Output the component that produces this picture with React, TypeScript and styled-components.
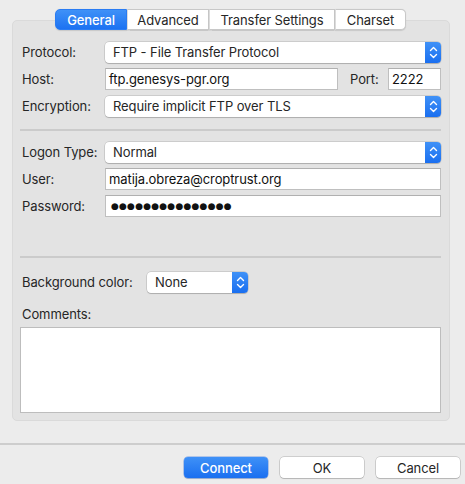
import React from "react";
import styled, { createGlobalStyle } from "styled-components";

const Global = createGlobalStyle`
  html, body { margin: 0; padding: 0; }
  body {
    width: 465px; height: 484px; overflow: hidden;
    background: #ececec;
    font-family: Inter, "Liberation Sans", sans-serif;
    font-size: 13px; color: #262626;
    -webkit-font-smoothing: antialiased;
  }
`;

const Window = styled.div`
  width: 465px; height: 484px;
  display: flex; flex-direction: column;
  box-sizing: border-box;
  padding-top: 9px;
`;

const TabBar = styled.div`
  position: relative; z-index: 2;
  display: flex; justify-content: center;
  margin-left: -4px;
  height: 21px; margin-bottom: -10px;
`;

const Tab = styled.div<{ $active?: boolean; $w: number; $first?: boolean; $last?: boolean }>`
  box-sizing: border-box;
  width: ${(p) => p.$w}px; height: 21px;
  display: flex; align-items: center; justify-content: center;
  font-size: 13px; letter-spacing: -0.1px;
  background: ${(p) => (p.$active ? "linear-gradient(#3f91f7, #1c72f2)" : "#ffffff")};
  color: ${(p) => (p.$active ? "#ffffff" : "#262626")};
  font-weight: ${(p) => (p.$active ? 500 : 400)};
  border: 1px solid ${(p) => (p.$active ? "#2a7cf3" : "#c8c8c8")};
  border-left: ${(p) => (p.$first ? undefined : p.$active ? "none" : "1px solid #dcdcdc")};
  border-radius: ${(p) => (p.$first ? "5px 0 0 5px" : p.$last ? "0 5px 5px 0" : "0")};
  box-shadow: 0 0.5px 1px rgba(0,0,0,0.12);
`;

const Panel = styled.div`
  margin: 0 15px 0 12px;
  height: 401px;
  box-sizing: border-box;
  background: #e3e3e3;
  border: 1px solid #dadada;
  border-radius: 5px;
  padding: 20px 8px 7px 7px;
  display: flex; flex-direction: column;
`;

const Group = styled.div<{ $gap: number }>`
  display: flex; flex-direction: column;
  gap: ${(p) => p.$gap}px;
`;

const Row = styled.div`
  display: flex; align-items: center;
  height: 22px;
`;

const Label = styled.div<{ $w?: number }>`
  width: ${(p) => p.$w ?? 85}px;
  flex: none;
  padding-left: 2px; box-sizing: border-box;
  color: #262626; letter-spacing: -0.1px;
`;

const Select = styled.div<{ $w?: number }>`
  position: relative;
  box-sizing: border-box;
  ${(p) => (p.$w ? `width: ${p.$w}px; flex: none;` : "flex: 1;")}
  height: 21px;
  background: #ffffff;
  border-radius: 4px;
  box-shadow: 0 0 0 0.5px rgba(0,0,0,0.2), 0 1px 1px rgba(0,0,0,0.15);
  display: flex; align-items: center;
  padding-left: 8px;
  overflow: hidden;
  letter-spacing: -0.1px;
`;

const Arrow = styled.div`
  position: absolute; right: 0; top: 0; bottom: 0;
  width: 16px;
  background: linear-gradient(#3f91f7, #1a6ff0);
  display: flex; align-items: center; justify-content: center;
`;

const Input = styled.div<{ $w?: number }>`
  box-sizing: border-box;
  ${(p) => (p.$w ? `width: ${p.$w}px; flex: none;` : "flex: 1;")}
  height: 22px;
  background: #ffffff;
  border: 1px solid #bfbfbf;
  border-top-color: #b0b0b0;
  display: flex; align-items: center;
  padding-left: 3px;
  color: #111;
  letter-spacing: -0.1px;
  white-space: nowrap; overflow: hidden;
`;

const Dots = styled.span`
  font-family: "DejaVu Sans", sans-serif;
  font-size: 9px;
  letter-spacing: 0.2px;
  color: #111;
  padding-left: 2px;
`;

const Sep = styled.div<{ $mt: number; $mb: number }>`
  height: 2px;
  margin: ${(p) => p.$mt}px 0 ${(p) => p.$mb}px;
  background: #cbcbcb;
`;

const PortLabel = styled.div`
  margin-left: 12px; width: 38px; flex: none;
  letter-spacing: -0.1px;
`;

const CommentsLabel = styled.div`
  margin-top: 13px; padding-left: 2px;
  height: 16px; line-height: 16px;
  letter-spacing: -0.1px;
`;

const TextArea = styled.div`
  margin-top: 5px;
  height: 86px;
  background: #ffffff;
  border: 1px solid #bdbdbd;
  box-sizing: border-box;
`;

const BottomSep = styled.div`
  margin-top: 22px;
  height: 2px;
  background: #cdcdcd;
`;

const Buttons = styled.div`
  display: flex; justify-content: flex-end;
  gap: 12px;
  padding: 12px 5px 0 0;
`;

const Button = styled.div<{ $primary?: boolean }>`
  box-sizing: border-box;
  width: 84px; height: 21px;
  border-radius: 4px;
  display: flex; align-items: center; justify-content: center;
  font-size: 13px; letter-spacing: -0.1px;
  background: ${(p) => (p.$primary ? "linear-gradient(#3f91f7, #1a6ff0)" : "#ffffff")};
  color: ${(p) => (p.$primary ? "#ffffff" : "#262626")};
  font-weight: ${(p) => (p.$primary ? 500 : 400)};
  box-shadow: ${(p) =>
    p.$primary
      ? "0 0 0 0.5px rgba(0,80,220,0.5), 0 1px 1px rgba(0,0,0,0.15)"
      : "0 0 0 0.5px rgba(0,0,0,0.25), 0 1px 1px rgba(0,0,0,0.12)"};
`;

const Chevrons = () => (
  <svg width="9" height="13" viewBox="0 0 9 13" fill="none" stroke="#fff" strokeWidth="1.4" strokeLinecap="round" strokeLinejoin="round">
    <path d="M1.5 4.5 L4.5 1.5 L7.5 4.5" />
    <path d="M1.5 8.5 L4.5 11.5 L7.5 8.5" />
  </svg>
);

const Popup = ({ text, w }: { text: string; w?: number }) => (
  <Select $w={w}>
    {text}
    <Arrow>
      <Chevrons />
    </Arrow>
  </Select>
);

export default function App() {
  return (
    <>
      <Global />
      <Window>
        <TabBar>
          <Tab $active $first $w={72}>General</Tab>
          <Tab $w={82}>Advanced</Tab>
          <Tab $w={126}>Transfer Settings</Tab>
          <Tab $last $w={71}>Charset</Tab>
        </TabBar>
        <Panel>
          <Group $gap={5}>
            <Row>
              <Label>Protocol:</Label>
              <Popup text="FTP - File Transfer Protocol" />
            </Row>
            <Row>
              <Label>Host:</Label>
              <Input>ftp.genesys-pgr.org</Input>
              <PortLabel>Port:</PortLabel>
              <Input $w={53}>2222</Input>
            </Row>
            <Row>
              <Label>Encryption:</Label>
              <Popup text="Require implicit FTP over TLS" />
            </Row>
          </Group>
          <Sep $mt={12} $mb={10} />
          <Group $gap={5}>
            <Row>
              <Label>Logon Type:</Label>
              <Popup text="Normal" />
            </Row>
            <Row>
              <Label>User:</Label>
              <Input>matija.obreza@croptrust.org</Input>
            </Row>
            <Row>
              <Label>Password:</Label>
              <Input>
                <Dots>●●●●●●●●●●●●●●●</Dots>
              </Input>
            </Row>
          </Group>
          <Sep $mt={39} $mb={13} />
          <Row>
            <Label $w={127}>Background color:</Label>
            <Popup text="None" w={101} />
          </Row>
          <CommentsLabel>Comments:</CommentsLabel>
          <TextArea />
        </Panel>
        <BottomSep />
        <Buttons>
          <Button $primary>Connect</Button>
          <Button>OK</Button>
          <Button>Cancel</Button>
        </Buttons>
      </Window>
    </>
  );
}
